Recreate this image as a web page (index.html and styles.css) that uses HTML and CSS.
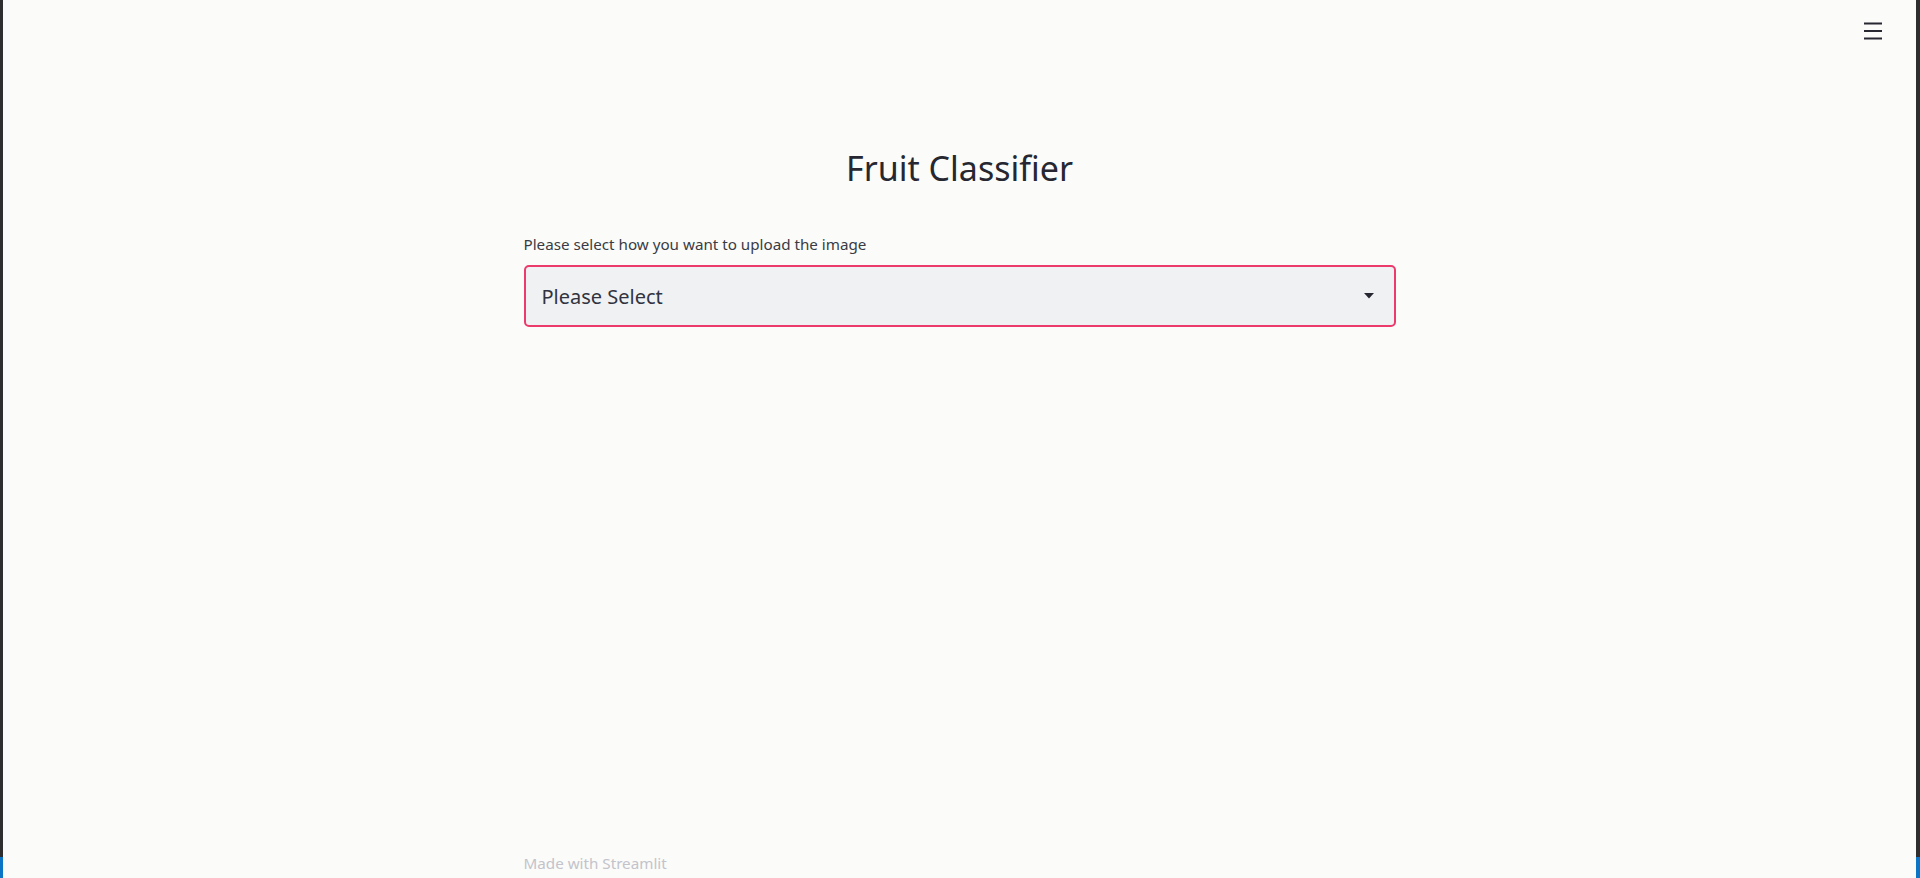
FILE: index.html
```html
<!DOCTYPE html>
<html lang="en">
<head>
<meta charset="utf-8">
<title>Fruit Classifier</title>
<link rel="stylesheet" href="styles.css">
</head>
<body>
<div class="frame">
  <div class="edge edge-left"><div class="edge-dark"></div><div class="edge-blue"></div></div>
  <div class="app">
    <header class="toolbar">
      <button class="menu" aria-label="Menu">
        <svg width="18" height="18" viewBox="0 0 18 18"><path d="M0 1.5h18M0 9h18M0 16.5h18" stroke="#262730" stroke-width="2.2" fill="none"/></svg>
      </button>
    </header>
    <main class="content">
      <h1 class="title">Fruit Classifier</h1>
      <label class="field-label">Please select how you want to upload the image</label>
      <div class="select">
        <span class="select-value">Please Select</span>
        <svg class="caret" width="10" height="6" viewBox="0 0 10 6"><path d="M0 0h10L5 5.5z" fill="#262730"/></svg>
      </div>
      <div class="spacer"></div>
      <footer class="footer">Made with Streamlit</footer>
    </main>
  </div>
  <div class="edge edge-right"><div class="edge-dark"></div><div class="edge-blue"></div></div>
</div>
</body>
</html>
```

FILE: styles.css
```css
html, body {
  margin: 0;
  padding: 0;
  height: 100%;
  overflow: hidden;
}
body {
  background: #fbfbf9;
  font-family: "Noto Sans", "Open Sans", sans-serif;
  color: #262730;
}
.frame {
  display: flex;
  height: 878px;
}
.edge {
  display: flex;
  flex-direction: column;
  flex: none;
}
.edge-left { width: 3px; }
.edge-right { width: 4px; }
.edge-dark { flex: 1; background: #2e2e2e; }
.edge-blue { height: 21px; background: #0b74c4; }
.app {
  flex: 1;
  display: flex;
  flex-direction: column;
  min-width: 0;
}
.toolbar {
  display: flex;
  justify-content: flex-end;
  padding: 22px 34px 0 0;
  height: 40px;
}
.menu {
  border: 0;
  background: transparent;
  padding: 0;
  width: 18px;
  height: 18px;
  display: block;
  cursor: pointer;
}
.menu svg { display: block; }
.content {
  flex: 1;
  width: 872px;
  margin: 0 auto;
  display: flex;
  flex-direction: column;
  padding-top: 85px;
}
.title {
  margin: 0;
  font-size: 34px;
  line-height: 43px;
  font-weight: 400;
  text-align: center;
  color: #262730;
}
.field-label {
  margin-top: 44px;
  font-size: 15.2px;
  line-height: 20px;
  color: #3a3b44;
}
.select {
  margin-top: 11px;
  height: 62px;
  box-sizing: border-box;
  border: 2px solid #ec3a6c;
  border-radius: 5px;
  background: #eff1f3;
  display: flex;
  align-items: center;
  padding: 0 20px 0 16px;
}
.select-value {
  flex: 1;
  font-size: 20px;
  color: #31333f;
}
.caret { display: block; }
.spacer { flex: 1; }
.footer {
  font-size: 15.2px;
  line-height: 20px;
  color: #c3c3cb;
  padding-bottom: 5px;
}
```
